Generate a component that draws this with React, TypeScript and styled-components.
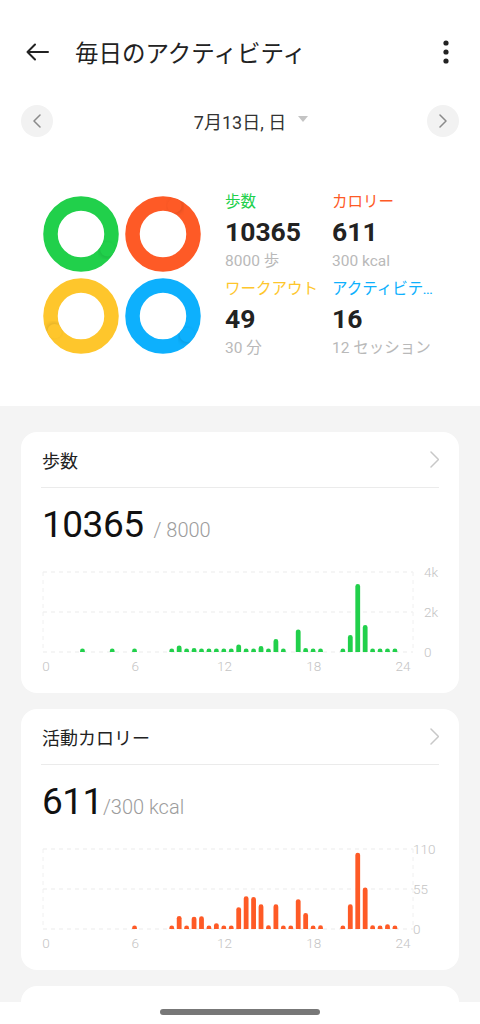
import React from 'react';
import styled, { createGlobalStyle } from 'styled-components';

const GlobalStyle = createGlobalStyle`
  html, body {
    margin: 0;
    padding: 0;
    background: #fff;
  }
  body {
    font-family: Roboto, "Noto Sans CJK JP", sans-serif;
    -webkit-font-smoothing: antialiased;
  }
  * {
    box-sizing: border-box;
  }
`;

const Colors = {
  green: '#21d04b',
  red: '#fe5a26',
  yellow: '#fec62c',
  blue: '#0db0fd',
  text: '#222222',
  muted: '#b9b9b9',
  page: '#f4f4f4',
};

type RingColor = 'green' | 'red' | 'yellow' | 'blue';

const Screen = styled.div`
  width: 480px;
  height: 1024px;
  display: flex;
  flex-direction: column;
  overflow: hidden;
  background: #fff;
`;

const Scroll = styled.main`
  flex: 1;
  overflow: hidden;
  background: ${Colors.page};
`;

const Top = styled.section`
  background: #fff;
  padding: 24px 0 47px;
`;

const Header = styled.header`
  height: 56px;
  display: flex;
  align-items: center;
  padding: 0 22px 0 25px;
`;

const IconButton = styled.button`
  border: 0;
  background: none;
  padding: 0;
  display: flex;
  align-items: center;
  justify-content: center;
  width: 24px;
  height: 28px;
`;

const Title = styled.h1`
  flex: 1;
  margin: 0 0 0 26px;
  font-size: 23.5px;
  font-weight: 400;
  color: ${Colors.text};
`;

const DateRow = styled.div`
  margin-top: 25px;
  height: 32px;
  display: flex;
  align-items: center;
  padding: 0 21px;
`;

const RoundNav = styled.button`
  width: 32px;
  height: 32px;
  border-radius: 50%;
  border: 0;
  padding: 0;
  background: #f2f2f2;
  display: flex;
  align-items: center;
  justify-content: center;
`;

const DateLabel = styled.div`
  flex: 1;
  display: flex;
  align-items: center;
  justify-content: center;
  padding-left: 22px;
  font-size: 18px;
  color: #333;

  &::after {
    content: '';
    margin-left: 12px;
    border-left: 5px solid transparent;
    border-right: 5px solid transparent;
    border-top: 6px solid #c4c4c4;
    transform: translateY(-2px);
  }
`;

const Summary = styled.div`
  margin-top: 54px;
  display: flex;
  align-items: center;
  padding-left: 43px;
`;

const Rings = styled.div`
  display: grid;
  grid-template-columns: repeat(2, 76px);
  gap: 6px;
`;

const Stats = styled.div`
  margin-left: 24px;
  display: grid;
  grid-template-columns: 107px 103px;
  row-gap: 6px;
`;

const Stat = styled.div`
  display: flex;
  flex-direction: column;
  min-width: 0;
`;

const StatLabel = styled.div<{ color: RingColor }>`
  font-size: 15.5px;
  line-height: 22px;
  color: ${({ color }) => Colors[color]};
  white-space: nowrap;
  overflow: hidden;
  text-overflow: ellipsis;
`;

const StatValue = styled.div`
  margin-top: 3px;
  font-size: 26.5px;
  line-height: 32px;
  font-weight: 700;
  color: ${Colors.text};
`;

const StatGoal = styled.div`
  margin-top: 2px;
  font-size: 15.5px;
  line-height: 22px;
  color: ${Colors.muted};
  white-space: nowrap;
`;

const Cards = styled.div`
  display: flex;
  flex-direction: column;
  gap: 16px;
  padding: 26px 21px 0;
`;

const Card = styled.section`
  background: #fff;
  border-radius: 16px;
  padding: 0 20px 17px;
`;

const CardHeader = styled.div`
  height: 56px;
  display: flex;
  align-items: center;
  justify-content: space-between;
  border-bottom: 1px solid #ebebeb;
  font-size: 18px;
  color: ${Colors.text};
  padding-left: 1px;
`;

const ValueRow = styled.div`
  margin-top: 15px;
  height: 44px;
  display: flex;
  align-items: baseline;
  padding-left: 1px;
`;

const BigValue = styled.span`
  font-size: 37px;
  line-height: 44px;
  color: #111;
  letter-spacing: -0.5px;
`;

const Target = styled.span<{ gap: number }>`
  margin-left: ${({ gap }) => gap}px;
  font-size: 20px;
  font-weight: 300;
  color: #9c9c9c;
`;

const ChartSvg = styled.svg`
  display: block;
  margin-top: 9px;
  font-family: Roboto, sans-serif;
`;

const Stub = styled.div`
  height: 40px;
  background: #fff;
  border-radius: 16px 16px 0 0;
`;

const NavBar = styled.div`
  height: 22px;
  background: #fff;
  display: flex;
  justify-content: center;
`;

const HomePill = styled.div`
  margin-top: 7px;
  width: 160px;
  height: 6px;
  border-radius: 3px;
  background: #777;
`;

const ringAngle: Record<RingColor, number> = {
  green: 30,
  red: -68,
  yellow: 150,
  blue: 38,
};

const Ring: React.FC<{ color: RingColor }> = ({ color }) => {
  const r = 30.5;
  const a = (ringAngle[color] * Math.PI) / 180;
  const x = 38 + r * Math.cos(a);
  const y = 38 + r * Math.sin(a);
  const tx = -Math.sin(a);
  const ty = Math.cos(a);
  return (
    <svg width="76" height="76" viewBox="0 0 76 76">
      <defs>
        <mask id={`m-${color}`}>
          <circle cx="38" cy="38" r={r} fill="none" stroke="#fff" strokeWidth="14.5" />
        </mask>
        <filter id={`b-${color}`} x="-80%" y="-80%" width="260%" height="260%">
          <feGaussianBlur stdDeviation="2" />
        </filter>
      </defs>
      <circle cx="38" cy="38" r={r} fill="none" stroke={Colors[color]} strokeWidth="14.5" />
      <g mask={`url(#m-${color})`}>
        <circle
          cx={x + tx * 1.5}
          cy={y + ty * 1.5}
          r="7"
          fill="rgba(0,0,0,0.14)"
          filter={`url(#b-${color})`}
        />
        <circle cx={x} cy={y} r="7.25" fill={Colors[color]} />
      </g>
    </svg>
  );
};

const stepsBars: Record<number, number> = {
  4: 100, 8: 100, 11: 100, 16: 100, 17: 330, 18: 120, 19: 200, 20: 120, 21: 100,
  22: 100, 23: 100, 24: 100, 25: 380, 26: 100, 27: 100, 28: 300, 29: 120, 30: 650,
  31: 100, 33: 1130, 34: 200, 35: 100, 36: 100, 39: 100, 40: 850, 41: 3400,
  42: 1350, 43: 100, 44: 100, 45: 100, 46: 100,
};

const calorieBars: Record<number, number> = {
  11: 3, 16: 3, 17: 18, 18: 3, 19: 17, 20: 17.5, 21: 3, 22: 8, 23: 3, 24: 3,
  25: 30, 26: 45, 27: 44, 28: 34, 29: 5, 30: 34, 31: 3, 32: 3, 33: 41, 34: 22,
  35: 3, 36: 5, 39: 3, 40: 34, 41: 105, 42: 57, 43: 5, 44: 3, 45: 6.5, 46: 3,
};

interface ChartProps {
  bars: Record<number, number>;
  max: number;
  color: RingColor;
  yLabels: string[];
  labelX: number;
}

const BASE = 96;
const PLOT_H = 80;

const barPath = (cx: number, h: number) => {
  const w = 4.8;
  const r = w / 2;
  const x0 = cx - r;
  const top = BASE - Math.max(h, 3.5);
  return `M${x0},${BASE} V${top + r} A${r},${r} 0 0 1 ${x0 + w},${top + r} V${BASE} Z`;
};

const Chart: React.FC<ChartProps> = ({ bars, max, color, yLabels, labelX }) => (
  <ChartSvg width="398" height="120" viewBox="0 0 398 120">
    {[16, 56, 96].map((y) => (
      <line key={y} x1="2" x2="372" y1={y} y2={y} stroke="#ebebeb" strokeDasharray="4 4" />
    ))}
    <line x1="2" x2="2" y1="16" y2="96" stroke="#f0f0f0" strokeDasharray="4 4" />
    <line x1="372" x2="372" y1="16" y2="96" stroke="#f0f0f0" strokeDasharray="4 4" />
    {Object.entries(bars).map(([k, v]) => (
      <path
        key={k}
        d={barPath(5 + (Number(k) + 0.9) * 7.44, (v / max) * PLOT_H)}
        fill={Colors[color]}
      />
    ))}
    {yLabels.map((t, i) => (
      <text key={t} x={labelX} y={16 + i * 40 + 5} fontSize="13.5" fill="#c4c4c4" fontWeight="300">
        {t}
      </text>
    ))}
    {[0, 6, 12, 18, 24].map((h) => (
      <text
        key={h}
        x={5 + h * 14.875}
        y="115"
        fontSize="13.5"
        textAnchor="middle"
        fill="#c4c4c4"
        fontWeight="300"
      >
        {h}
      </text>
    ))}
  </ChartSvg>
);

const Chevron: React.FC<{ dir: 'left' | 'right'; color: string; h: number }> = ({ dir, color, h }) => (
  <svg width={h / 2 + 2} height={h + 2} viewBox={`0 0 ${h / 2 + 2} ${h + 2}`}>
    <path
      d={dir === 'left' ? `M${h / 2 + 1},1 L1,${h / 2 + 1} L${h / 2 + 1},${h + 1}` : `M1,1 L${h / 2 + 1},${h / 2 + 1} L1,${h + 1}`}
      fill="none"
      stroke={color}
      strokeWidth="1.5"
      strokeLinecap="round"
      strokeLinejoin="round"
    />
  </svg>
);

const App: React.FC = () => (
  <Screen>
    <GlobalStyle />
    <Scroll>
      <Top>
        <Header>
          <IconButton>
            <svg width="24" height="24" viewBox="0 0 24 24">
              <path
                d="M23 12H2.5 M10 4.5 L2.5 12 L10 19.5"
                fill="none"
                stroke="#222"
                strokeWidth="2"
                strokeLinecap="round"
                strokeLinejoin="round"
              />
            </svg>
          </IconButton>
          <Title>毎日のアクティビティ</Title>
          <IconButton>
            <svg width="6" height="26" viewBox="0 0 6 26">
              <circle cx="3" cy="4" r="2.6" fill="#222" />
              <circle cx="3" cy="13" r="2.6" fill="#222" />
              <circle cx="3" cy="22" r="2.6" fill="#222" />
            </svg>
          </IconButton>
        </Header>
        <DateRow>
          <RoundNav>
            <Chevron dir="left" color="#8a8a8a" h={12} />
          </RoundNav>
          <DateLabel>7月13日, 日</DateLabel>
          <RoundNav>
            <Chevron dir="right" color="#8a8a8a" h={12} />
          </RoundNav>
        </DateRow>
        <Summary>
          <Rings>
            <Ring color="green" />
            <Ring color="red" />
            <Ring color="yellow" />
            <Ring color="blue" />
          </Rings>
          <Stats>
            <Stat>
              <StatLabel color="green">歩数</StatLabel>
              <StatValue>10365</StatValue>
              <StatGoal>8000 歩</StatGoal>
            </Stat>
            <Stat>
              <StatLabel color="red">カロリー</StatLabel>
              <StatValue>611</StatValue>
              <StatGoal>300 kcal</StatGoal>
            </Stat>
            <Stat>
              <StatLabel color="yellow">ワークアウト</StatLabel>
              <StatValue>49</StatValue>
              <StatGoal>30 分</StatGoal>
            </Stat>
            <Stat>
              <StatLabel color="blue">アクティビティ時間</StatLabel>
              <StatValue>16</StatValue>
              <StatGoal>12 セッション</StatGoal>
            </Stat>
          </Stats>
        </Summary>
      </Top>
      <Cards>
        <Card>
          <CardHeader>
            歩数
            <Chevron dir="right" color="#c8c8c8" h={15} />
          </CardHeader>
          <ValueRow>
            <BigValue>10365</BigValue>
            <Target gap={10}>/ 8000</Target>
          </ValueRow>
          <Chart bars={stepsBars} max={4000} color="green" yLabels={['4k', '2k', '0']} labelX={383} />
        </Card>
        <Card>
          <CardHeader>
            活動カロリー
            <Chevron dir="right" color="#c8c8c8" h={15} />
          </CardHeader>
          <ValueRow>
            <BigValue>611</BigValue>
            <Target gap={0}>/300 kcal</Target>
          </ValueRow>
          <Chart bars={calorieBars} max={110} color="red" yLabels={['110', '55', '0']} labelX={372} />
        </Card>
        <Stub />
      </Cards>
    </Scroll>
    <NavBar>
      <HomePill />
    </NavBar>
  </Screen>
);

export default App;
